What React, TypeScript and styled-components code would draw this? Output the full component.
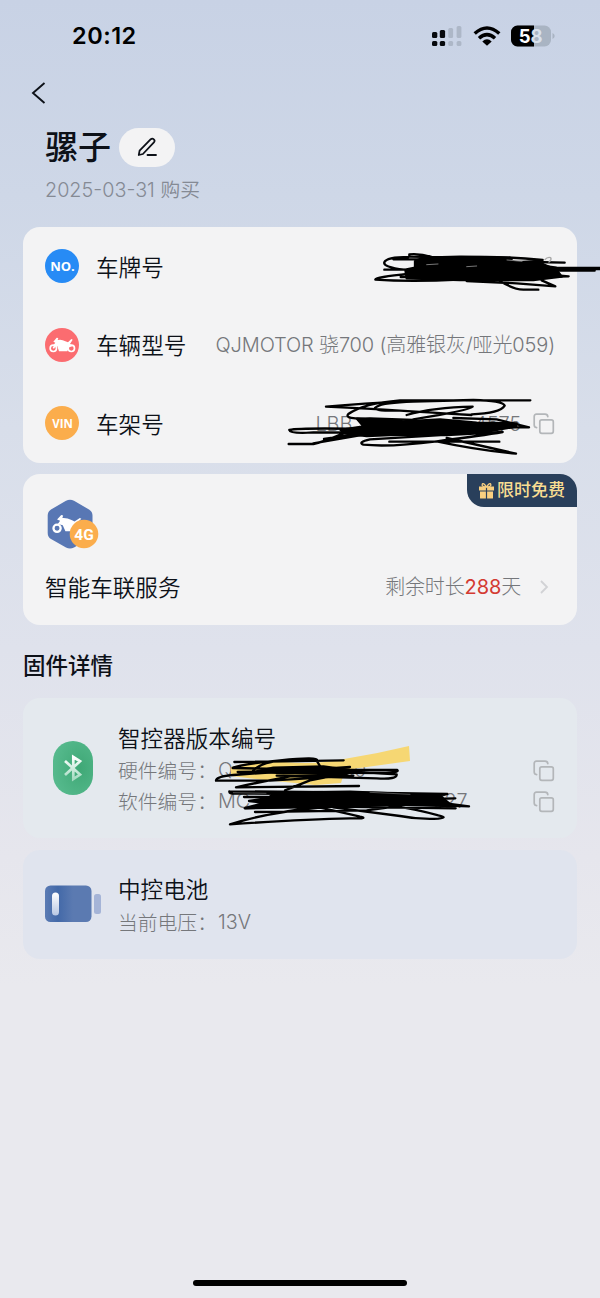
import React from "react";
import styled, { createGlobalStyle } from "styled-components";

const Global = createGlobalStyle`
  * { box-sizing: border-box; }
  body {
    margin: 0;
    font-family: Inter, "Noto Sans CJK SC", sans-serif;
    color: #0d1118;
    background: #e9e9ee;
  }
  svg { display: block; flex: none; }
`;

const Screen = styled.main`
  position: relative;
  width: 600px;
  height: 1298px;
  overflow: hidden;
  display: flex;
  flex-direction: column;
  padding: 0 23px;
  background: linear-gradient(180deg, #c8d2e5 0%, #ced7e7 15%, #d8deea 33%, #dfe2ec 50%, #e6e6ed 66%, #e9e9ee 76%, #e9e9ee 100%);
`;

const StatusBar = styled.header`
  height: 72px;
  display: flex;
  align-items: center;
  justify-content: space-between;
  padding: 0 22px 0 49px;
`;
const Time = styled.time`
  font-size: 23.5px;
  font-weight: 600;
  letter-spacing: 0.5px;
  margin-top: -1px;
  color: #000;
`;
const StatusIcons = styled.div`
  display: flex;
  align-items: center;
  gap: 10px;
`;
const NavBar = styled.nav`
  height: 42px;
  display: flex;
  align-items: center;
  padding-left: 8px;
`;
const Intro = styled.section`
  height: 113px;
  padding: 9px 22px 0;
`;
const NameRow = styled.div`
  height: 48px;
  display: flex;
  align-items: center;
  gap: 8px;
`;
const Name = styled.h1`
  margin: 0;
  font-size: 33px;
  line-height: 48px;
  font-weight: 500;
`;
const EditButton = styled.button`
  width: 56px;
  height: 39px;
  border: 0;
  border-radius: 20px;
  background: #f3f3f4;
  display: flex;
  align-items: center;
  justify-content: center;
  padding: 0;
`;
const Purchased = styled.p`
  margin: 5px 0 0;
  font-size: 19.8px;
  line-height: 28px;
  font-weight: 350;
  color: #858a94;
`;

const Card = styled.section<{ $h: number; $bg: string; $mt?: number }>`
  position: relative;
  flex: none;
  height: ${(p) => p.$h}px;
  margin-top: ${(p) => p.$mt ?? 0}px;
  border-radius: 17px;
  background: ${(p) => p.$bg};
`;
const InfoRow = styled.div`
  height: 78.5px;
  display: flex;
  align-items: center;
  padding: 0 22px;
`;
const Badge = styled.div<{ $bg: string; $size: number }>`
  width: 34px;
  height: 34px;
  margin-right: 17px;
  border-radius: 50%;
  background: ${(p) => p.$bg};
  color: #fff;
  font: 700 ${(p) => p.$size}px "Open Sans", sans-serif;
  display: flex;
  align-items: center;
  justify-content: center;
  padding-left: 1px;
`;
const Label = styled.div`
  font-size: 22.6px;
  line-height: 32px;
  padding-top: 3px;
  font-weight: 350;
  white-space: nowrap;
`;
const Value = styled.div`
  display: flex;
  flex: 1;
  justify-content: flex-end;
  align-items: center;
  padding-top: 1px;
  font-size: 20px;
  letter-spacing: -0.14px;
  line-height: 28px;
  font-weight: 300;
  color: #75777b;
  white-space: nowrap;
`;
const Fragment = styled.span<{ $gap?: number }>`
  margin-left: ${(p) => p.$gap ?? 0}px;
`;
const Remaining = styled.em`
  font-style: normal;
  font-weight: 400;
  color: #d33a31;
`;
const Promo = styled.div`
  position: absolute;
  top: 0;
  right: 0;
  width: 110px;
  height: 33px;
  border-radius: 0 17px 0 17px;
  background: #293f5b;
  color: #f8dd92;
  display: flex;
  align-items: center;
  padding-left: 11px;
  gap: 2px;
  font-size: 17px;
  line-height: 31px;
  font-weight: 500;
`;
const ServiceTop = styled.div`
  height: 88px;
  padding: 25px 0 0 24px;
`;
const ServiceRow = styled.div`
  height: 48px;
  display: flex;
  align-items: center;
  padding: 0 28px 0 22px;
`;
const Heading = styled.h2`
  margin: 24px 0 16px;
  font-size: 22.5px;
  line-height: 33px;
  font-weight: 500;
`;
const Device = styled.div`
  height: 100%;
  display: flex;
  align-items: center;
  padding: 0 22px;
`;
const IconSlot = styled.div<{ $pad: number }>`
  width: 73px;
  padding-left: ${(p) => p.$pad}px;
  flex: none;
`;
const DeviceText = styled.div`
  flex: 1;
`;
const Detail = styled.div`
  height: 31px;
  display: flex;
  align-items: center;
  font-size: 19.8px;
  line-height: 28px;
  font-weight: 300;
  color: #75777b;
  white-space: nowrap;
`;
const DetailKey = styled.span`
  width: 100px;
  font-family: "Noto Sans CJK SC", sans-serif;
`;
const Push = styled.span`
  margin-left: auto;
  padding-top: 1px;
`;
const Annotations = styled.svg`
  position: absolute;
  left: 0;
  top: 0;
  pointer-events: none;
`;
const HomeIndicator = styled.div`
  width: 214px;
  height: 6px;
  border-radius: 3px;
  background: #000;
  margin: auto auto 12px;
`;

const CopyIcon = () => (
  <svg width="22" height="22" viewBox="0 0 22 22" fill="none" stroke="#b3b6b9" strokeWidth="1.7" strokeLinecap="round">
    <rect x="6.8" y="6.8" width="13.5" height="13.5" rx="2" />
    <path d="M3.6 14.6Q1.2 14.3 1.2 12V3.5Q1.2 1.2 3.5 1.2H12Q14.6 1.2 14.8 3.6" />
  </svg>
);

const Bike = ({ width = 27 }: { width?: number }) => (
  <svg width={width} height={(width * 16) / 27} viewBox="0 0 81 48" fill="none">
    <circle cx="13" cy="34" r="9.5" stroke="#fff" strokeWidth="5" />
    <circle cx="67" cy="34" r="9.5" stroke="#fff" strokeWidth="5" />
    <path d="M13 34l9-16" stroke="#fff" strokeWidth="5" />
    <path d="M13 14L23 2l5 1-2 6q12-3 23 4l8 3 10-10 4 2-8 13 10 6-13 4-5 12H30L25 28l-12-3 6-8z" fill="#fff" />
  </svg>
);

const SignalIcon = () => (
  <svg width="32" height="22" viewBox="0 0 32 22">
    <g fill="#07090d">
      <rect x="1" y="7" width="5.3" height="6" rx="1.5" />
      <rect x="8.8" y="5" width="5.3" height="8" rx="1.5" />
      <rect x="1" y="16" width="5.3" height="5" rx="1.5" />
      <rect x="8.8" y="16" width="5.3" height="5" rx="1.5" />
    </g>
    <g fill="#adb7c7">
      <rect x="17.3" y="3" width="4.8" height="10" rx="1.5" />
      <rect x="25.6" y="1" width="4.8" height="12" rx="1.5" />
      <rect x="17.3" y="16" width="4.8" height="5" rx="1.5" />
      <rect x="25.6" y="16" width="4.8" height="5" rx="1.5" />
    </g>
  </svg>
);

const WifiIcon = () => (
  <svg width="28" height="20" viewBox="0 0 28 20" fill="none" stroke="#000" strokeWidth="3.5">
    <path d="M1.7 7.5Q14-3.5 26.3 7.5" />
    <path d="M6 12.2Q14 5 22 12.2" />
    <path d="M9.3 15.4Q14 11.3 18.7 15.4L14 19.8z" fill="#000" stroke="none" />
  </svg>
);

const BatteryStatus = () => (
  <svg width="44" height="22" viewBox="0 0 44 22">
    <rect x="0" y="0.5" width="40" height="21" rx="6.5" fill="#a9b4c3" />
    <path d="M6.5.5H23v21H6.5A6.5 6.5 0 0 1 0 15V7A6.5 6.5 0 0 1 6.5.5z" fill="#000" />
    <path d="M41.5 8q2.2 1 2.2 3t-2.2 3z" fill="#a9b4c3" />
    <text x="7.8" y="17.6" fontFamily="Inter" fontSize="18.5" fontWeight="700" fill="#fff">5</text>
    <text x="19.6" y="17.6" fontFamily="Inter" fontSize="18.5" fontWeight="700" fill="#d9e1ec">8</text>
  </svg>
);

const PencilIcon = () => (
  <svg width="20" height="20" viewBox="0 0 20 20" fill="none" stroke="#0d1118" strokeWidth="1.8" strokeLinecap="round" strokeLinejoin="round">
    <path d="M1.8 18l.8-4.3L13.8 2.2q1.500-1.300 3 .1t.1 3L5.900 17z" />
    <path d="M10.5 18H19" />
  </svg>
);

const ServiceIcon = () => (
  <svg width="52" height="51" viewBox="0 0 52 51">
    <path d="M19 1.8q4-2.2 8 0L42 10.5q3.500 2 3.500 6V34q0 4-3.500 6L27 48.5q-4 2-8 0L4 40Q.7 38 .7 34V16.500q0-4 3.300-6z" fill="#5877b4" />
    <g transform="translate(5.5 16) scale(.38)">
      <circle cx="12" cy="35" r="9.5" stroke="#fff" strokeWidth="6" fill="none" />
      <path d="M12 12L23 0l5 1-2 7q12-1 24 5l8 4 14-9 4 2-12 11q-6 14-12 22H34L27 27l-13-3 6-9z" fill="#fff" />
    </g>
    <circle cx="37" cy="35" r="14.3" fill="#fbad4c" />
    <text x="37" y="40.5" textAnchor="middle" fontFamily="Roboto" fontWeight="700" fontSize="15.5" fill="#fff">4G</text>
  </svg>
);

const GiftIcon = () => (
  <svg width="17" height="17" viewBox="0 0 17 17" fill="#f8cf80">
    <path d="M1 4.5h6.900v4H1zM9.100 4.500H16v4H9.100zM2 9.500h5.900v7H2.600q-.6 0-.6-.6zM9.100 9.500H15v6.400q0 .6-.6.6H9.100z" />
    <path d="M8.5 5Q3.500 4.800 4.200 2.400 5.300.1 8.500 5 11.700.1 12.800 2.400 13.500 4.800 8.500 5z" fill="none" stroke="#f8cf80" strokeWidth="1.3" />
  </svg>
);

const BluetoothIcon = () => (
  <svg width="40" height="54" viewBox="0 0 40 54">
    <defs>
      <linearGradient id="bt" x1="0" y1="0" x2="0" y2="1">
        <stop offset="0" stopColor="#fff" />
        <stop offset="1" stopColor="#a5dbc2" />
      </linearGradient>
      <radialGradient id="green" cx=".68" cy=".5" r=".65">
        <stop offset="0" stopColor="#3fa876" />
        <stop offset="1" stopColor="#55b98c" />
      </radialGradient>
    </defs>
    <rect width="40" height="54" rx="20" fill="url(#green)" />
    <path d="M12 20L27 33.5 20.3 38V16L27 20.3 12 34" fill="none" stroke="url(#bt)" strokeWidth="2.7" />
  </svg>
);

const BatteryIcon = () => (
  <svg width="57" height="38" viewBox="0 0 57 38">
    <defs>
      <linearGradient id="cell"><stop offset="0" stopColor="#5b7bb4" /><stop offset=".28" stopColor="#4369a8" /><stop offset=".6" stopColor="#5b7ab1" /></linearGradient>
      <linearGradient id="shine" x1="0" y1="0" x2="0" y2="1"><stop offset="0" stopColor="#fff" /><stop offset="1" stopColor="#b8c7e3" /></linearGradient>
    </defs>
    <rect width="46.5" height="36.5" x="0" y="0.5" rx="5.5" fill="url(#cell)" />
    <rect x="7" y="7.5" width="7" height="23" rx="3.5" fill="url(#shine)" />
    <rect x="49" y="9" width="7" height="20" rx="2.5" fill="#a5b4d7" />
  </svg>
);

const Scribbles = () => (
  <Annotations width="600" height="1298" viewBox="0 0 600 1298" fill="none" stroke="#000" strokeWidth="7" strokeLinecap="round" strokeLinejoin="round">
    <g transform="translate(360 225) scale(.33333)">
      <path d="M165 108L190 98 300 95 450 98 460 112 540 108 550 118 590 135 605 155 520 165 300 165 140 160 136 134 165 128z" fill="#000" />
      <path d="M216 96Q180 85 148 88V95Q270 97 360 96T548 105L520 111 614 113M145 96Q80 96 73 112 68 126 133 134H73M100 103H220M148 146Q44 157 46 164 150 171 300 164T626 154L420 136M122 156L270 154M320 168L470 175 586 184 545 166M420 168Q460 193 490 194H535M170 111L420 105 590 128 720 129M704 137L600 136 460 138 590 148M560 132H720" />
      <path d="M441 105l45 4M320 125l30-2M200 119l34-2" stroke="#777" strokeWidth="3" />
      <path d="M555 104q7-9 17-6 4 6-5 13" stroke="#aaa" strokeWidth="4" />
    </g>
    <g transform="translate(280 380) scale(.33333)">
      <path d="M182 150L250 139 231 116 330 119 370 124 480 118 590 128 710 130 708 140 630 153 470 164 330 165 260 168 190 160z" fill="#000" />
      <path d="M751 61H360Q250 70 205 102 190 119 270 115L400 120M290 80Q310 68 400 65T580 60Q670 62 674 77 660 100 575 103M138 80Q250 70 380 64M138 80Q270 86 360 92T575 105M290 80Q265 93 360 92M380 105Q460 82 578 80 570 91 400 118M28 150Q60 143 250 147M28 150Q30 162 100 157L450 158M26 192H100Q135 184 190 160M132 177L350 145M100 190L330 150M235 120Q300 145 500 165L668 156Q610 166 470 184T250 194Q232 187 270 178L520 163M328 185H658M470 184Q590 210 708 221L500 174M520 114L650 118 747 142 610 142 300 145" />
    </g>
    <path d="M231 767Q255 759 285 762T344 759Q376 754 409 746L410 761 345 770 341 783 315 785 265 780 231 776z" fill="#f6d773" stroke="none" />
    <g transform="translate(200 730) scale(.33333)">
      <path d="M170 124L220 113 370 109 448 120 445 130 250 130z" fill="#000" />
      <path d="M103 96L250 94 431 91M48 152Q49 139 100 135L450 111M48 152L210 152 460 137M98 114Q120 103 240 91T350 92L361 110M98 114L240 117 350 112M155 130Q166 105 220 95T340 88M113 126L360 120 592 120Q600 128 545 129L350 128M440 125L590 133Q592 149 530 145L230 137M440 132L270 139Q180 156 108 172L477 168M255 181L330 151 438 130" />
    </g>
    <g transform="translate(200 730) scale(.33333)">
      <path d="M225 188L450 185 600 191 720 196 730 206 757 228 590 224 350 230 136 234 195 219 147 213 205 204z" fill="#000" />
      <path d="M88 184L450 187 742 192 690 207 766 205M88 184Q87 192 103 190L450 194M132 201L600 202 807 229 600 222M134 235L400 230 767 235M165 246L500 241 590 229Q650 238 715 256 747 263 715 266 655 269 600 258L400 232M90 283Q190 250 360 233 430 248 480 260 510 266 450 265 310 268 90 283M100 280Q220 245 350 232" />
      <path d="M100 188L198 190M510 187l120 6" stroke="#777" strokeWidth="2" />
    </g>
  </Annotations>
);

export default function App() {
  return (
    <Screen lang="zh-CN">
      <Global />
      <StatusBar>
        <Time>20:12</Time>
        <StatusIcons><SignalIcon /><WifiIcon /><BatteryStatus /></StatusIcons>
      </StatusBar>
      <NavBar>
        <svg width="15" height="22" viewBox="0 0 15 22" fill="none" stroke="#0d1118" strokeWidth="1.9"><path d="M13.5 1L2 11l11.5 10" /></svg>
      </NavBar>
      <Intro>
        <NameRow><Name>骡子</Name><EditButton aria-label="编辑"><PencilIcon /></EditButton></NameRow>
        <Purchased>2025-03-31 购买</Purchased>
      </Intro>

      <Card $h={235.5} $bg="#f3f3f4">
        <InfoRow><Badge $bg="#278bf5" $size={13}>NO.</Badge><Label>车牌号</Label></InfoRow>
        <InfoRow>
          <Badge $bg="#fb6c70" $size={12}><Bike /></Badge>
          <Label>车辆型号</Label>
          <Value>QJMOTOR 骁700 (高雅银灰/哑光059)</Value>
        </InfoRow>
        <InfoRow>
          <Badge $bg="#fbad4c" $size={11.5}>VIN</Badge><Label>车架号</Label>
          <Value><Fragment>LBB</Fragment><Fragment $gap={122}>4575</Fragment><Fragment $gap={12}><CopyIcon /></Fragment></Value>
        </InfoRow>
      </Card>

      <Card $h={151} $bg="#f3f3f4" $mt={11.5}>
        <Promo><GiftIcon />限时免费</Promo>
        <ServiceTop><ServiceIcon /></ServiceTop>
        <ServiceRow>
          <Label>智能车联服务</Label>
          <Value>剩余时长<Remaining>288</Remaining>天
            <Fragment $gap={19}><svg width="9" height="14" viewBox="0 0 9 14" fill="none" stroke="#d1d2d5" strokeWidth="1.8"><path d="M1 1l6 6-6 6" /></svg></Fragment>
          </Value>
        </ServiceRow>
      </Card>

      <Heading>固件详情</Heading>

      <Card $h={140} $bg="#e4e9ee">
        <Device>
          <IconSlot $pad={8}><BluetoothIcon /></IconSlot>
          <DeviceText>
            <Label>智控器版本编号</Label>
            <Detail><DetailKey>硬件编号：</DetailKey><Fragment>Q</Fragment><Fragment $gap={109}>80</Fragment><Push><CopyIcon /></Push></Detail>
            <Detail><DetailKey>软件编号：</DetailKey><Fragment>MC</Fragment><Fragment $gap={182}>027</Fragment><Push><CopyIcon /></Push></Detail>
          </DeviceText>
        </Device>
      </Card>

      <Card $h={108.5} $bg="#e0e4ee" $mt={12}>
        <Device>
          <IconSlot $pad={0}><BatteryIcon /></IconSlot>
          <DeviceText>
            <Label>中控电池</Label>
            <Detail><DetailKey>当前电压：</DetailKey>13V</Detail>
          </DeviceText>
        </Device>
      </Card>
      <HomeIndicator />
      <Scribbles />
    </Screen>
  );
}
